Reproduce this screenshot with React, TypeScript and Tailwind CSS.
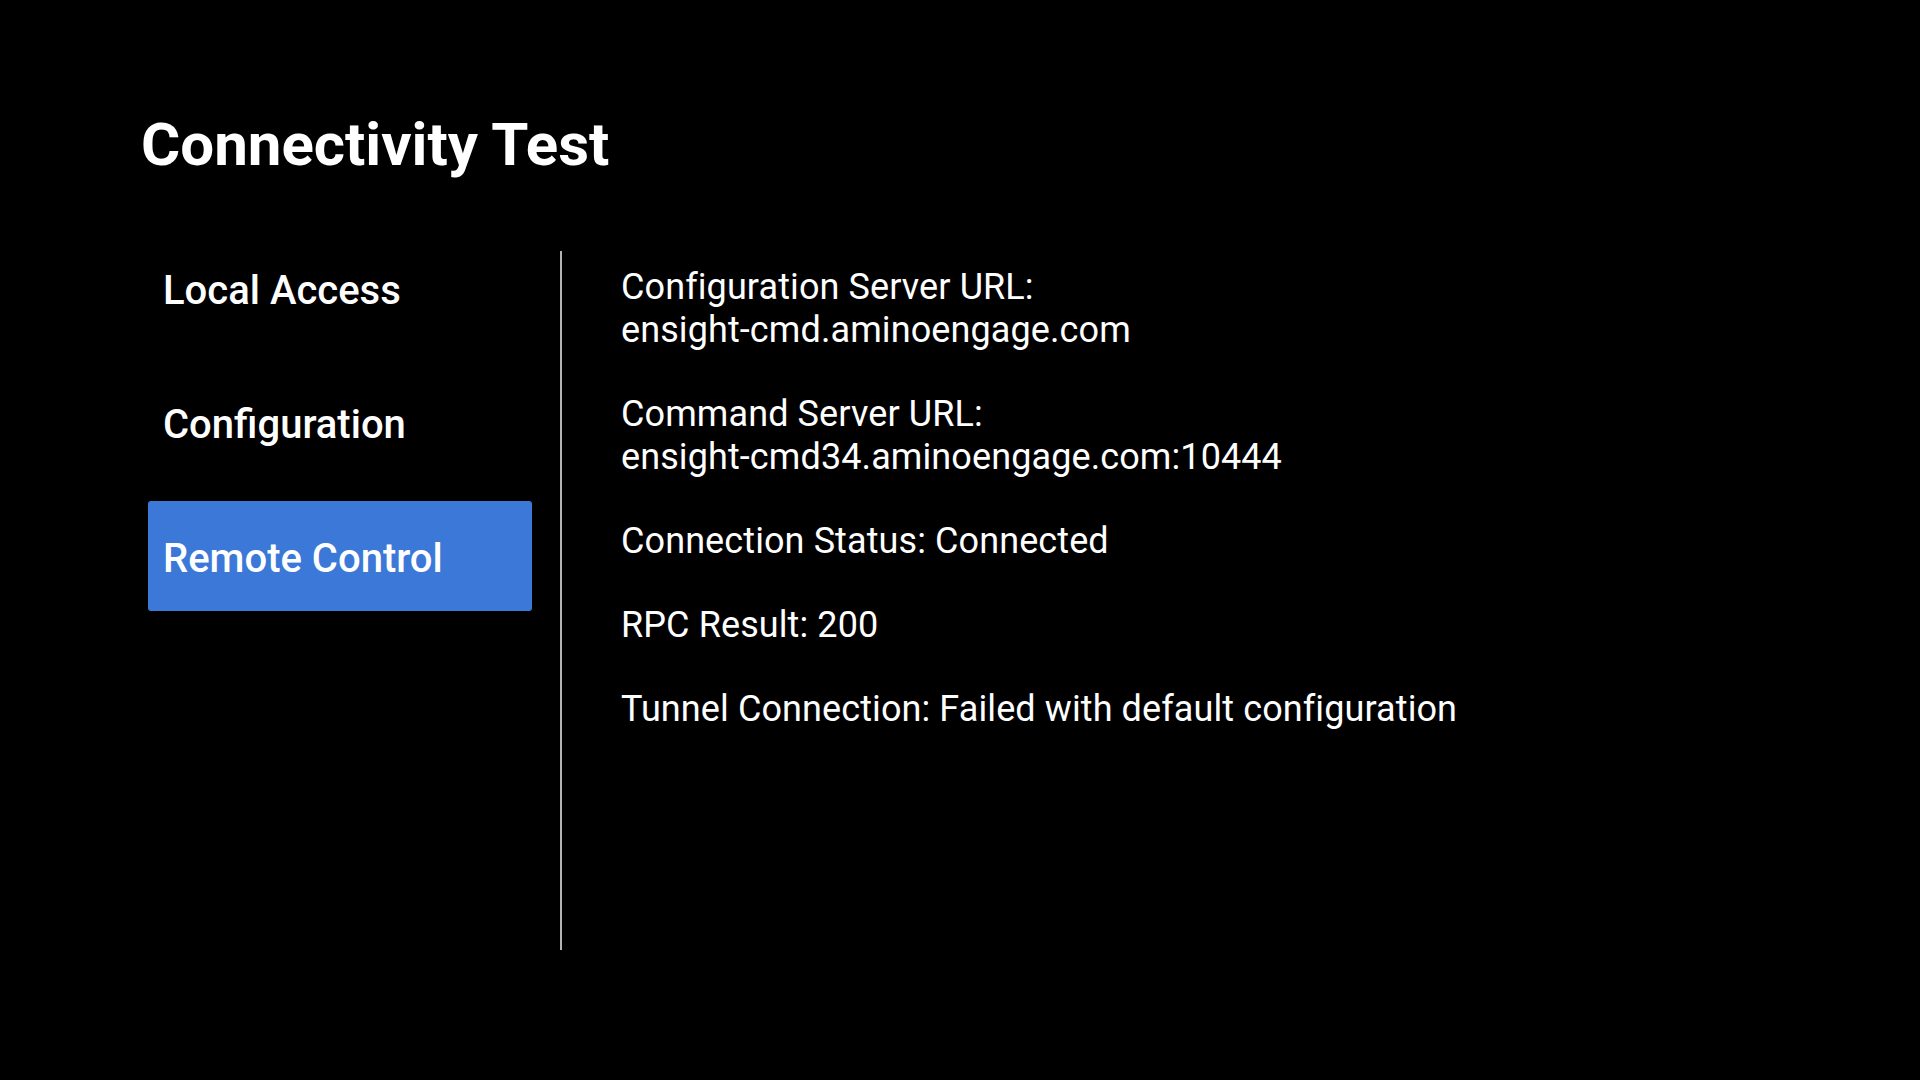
const navItems = ["Local Access", "Configuration", "Remote Control"];
const activeItem = "Remote Control";

const details: string[][] = [
  ["Configuration Server URL:", "ensight-cmd.aminoengage.com"],
  ["Command Server URL:", "ensight-cmd34.aminoengage.com:10444"],
  ["Connection Status: Connected"],
  ["RPC Result: 200"],
  ["Tunnel Connection: Failed with default configuration"],
];

function NavItem({ label, active }: { label: string; active: boolean }) {
  return (
    <li
      className={
        active
          ? "flex h-[110px] items-center rounded-[3px] bg-[#3c78d8] pl-[15px] pt-[5px] text-[40px] font-medium text-white"
          : "flex h-[110px] items-center pl-[15px] pt-[5px] text-[40px] font-medium text-white"
      }
    >
      {label}
    </li>
  );
}

export default function App() {
  return (
    <div
      className="min-h-[1080px] w-full bg-black pl-[141px] pt-[115px] text-white"
      style={{ fontFamily: "Roboto, 'Noto Sans', sans-serif" }}
    >
      <h1 className="text-[60px] font-bold leading-[60px]">Connectivity Test</h1>

      <div className="mt-[58px] flex">
        <ul className="ml-[7px] flex w-[384px] flex-col gap-[24px]">
          {navItems.map((item) => (
            <NavItem key={item} label={item} active={item === activeItem} />
          ))}
        </ul>

        <div className="ml-[28px] mt-[18px] h-[699px] w-[2px] bg-[#b3b3b3]" />

        <div className="ml-[59px] mt-[33px] flex flex-col gap-[41px] text-[36px] leading-[43px] tracking-[0.1px]">
          {details.map((lines, i) => (
            <div key={i}>
              {lines.map((line) => (
                <p key={line}>{line}</p>
              ))}
            </div>
          ))}
        </div>
      </div>
    </div>
  );
}
